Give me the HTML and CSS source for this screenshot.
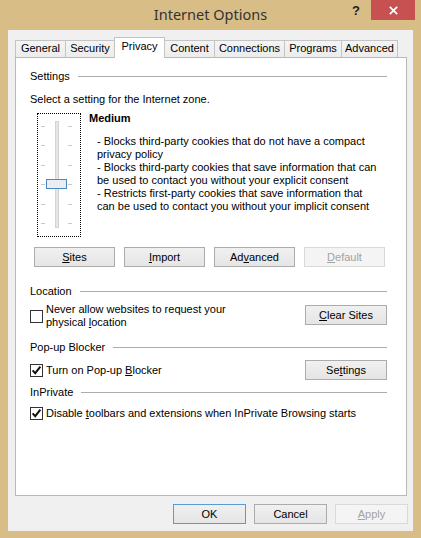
FILE: index.html
```html
<!DOCTYPE html>
<html lang="en">
<head>
<meta charset="utf-8">
<title>Internet Options</title>
<link rel="stylesheet" href="styles.css">
</head>
<body>
<div class="window">
  <header class="titlebar">
    <div class="spacer"></div>
    <div class="title">Internet Options</div>
    <div class="controls">
      <span class="help">?</span>
      <span class="close"><svg width="9" height="9" viewBox="0 0 9 9"><path d="M0.8 0.8 L8.2 8.2 M8.2 0.8 L0.8 8.2" stroke="#fff" stroke-width="1.7" fill="none"/></svg></span>
    </div>
  </header>

  <div class="client">
    <nav class="tabs">
      <div class="tab t-general">General</div>
      <div class="tab t-security">Security</div>
      <div class="tab tab-active t-privacy">Privacy</div>
      <div class="tab t-content">Content</div>
      <div class="tab t-connections">Connections</div>
      <div class="tab t-programs">Programs</div>
      <div class="tab t-advanced">Advanced</div>
    </nav>

    <section class="panel">
      <div class="group g-settings">Settings</div>
      <div class="prompt">Select a setting for the Internet zone.</div>

      <div class="level">
        <div class="slider">
          <svg width="42" height="122" viewBox="0 0 42 122">
            <rect x="17.5" y="7.5" width="3" height="106" fill="#e6e6e6" stroke="#d4d4d4"/>
            <g fill="#c8c8c8">
              <rect x="3" y="12" width="4" height="1"/><rect x="30" y="12" width="4" height="1"/>
              <rect x="3" y="31" width="4" height="1"/><rect x="30" y="31" width="4" height="1"/>
              <rect x="3" y="51" width="4" height="1"/><rect x="30" y="51" width="4" height="1"/>
              <rect x="3" y="70" width="4" height="1"/><rect x="30" y="70" width="4" height="1"/>
              <rect x="3" y="90" width="4" height="1"/><rect x="30" y="90" width="4" height="1"/>
              <rect x="3" y="109" width="4" height="1"/><rect x="30" y="109" width="4" height="1"/>
            </g>
            <rect x="8.5" y="65.5" width="20" height="9" fill="#e9eef4" stroke="#4a88c4"/>
          </svg>
        </div>
        <div class="level-info">
          <div class="level-name">Medium</div>
          <div class="level-desc">
            <div>- Blocks third-party cookies that do not have a compact</div>
            <div>privacy policy</div>
            <div>- Blocks third-party cookies that save information that can</div>
            <div>be used to contact you without your explicit consent</div>
            <div>- Restricts first-party cookies that save information that</div>
            <div>can be used to contact you without your implicit consent</div>
          </div>
        </div>
      </div>

      <div class="btn-row">
        <span class="btn btn-wide"><u>S</u>ites</span>
        <span class="btn btn-wide"><u>I</u>mport</span>
        <span class="btn btn-wide">Ad<u>v</u>anced</span>
        <span class="btn btn-wide btn-disabled"><u>D</u>efault</span>
      </div>

      <div class="group g-location">Location</div>
      <div class="opt-row r-location">
        <div class="check check-center">
          <span class="box"></span>
          <span class="check-text">Never allow websites to request your<br>physical <u>l</u>ocation</span>
        </div>
        <span class="btn btn-side btn-location"><u>C</u>lear Sites</span>
      </div>

      <div class="group g-popup">Pop-up Blocker</div>
      <div class="opt-row r-popup">
        <div class="check check-center">
          <span class="box box-checked"><svg width="11" height="11" viewBox="0 0 11 11"><path d="M1.6 5.4 L4.2 8.2 L9.4 1.6" stroke="#111" stroke-width="2" fill="none"/></svg></span>
          <span class="check-text">Turn on Pop-up <u>B</u>locker</span>
        </div>
        <span class="btn btn-side">Se<u>t</u>tings</span>
      </div>

      <div class="group g-inprivate">InPrivate</div>
      <div class="opt-row r-inprivate">
        <div class="check check-center">
          <span class="box box-checked"><svg width="11" height="11" viewBox="0 0 11 11"><path d="M1.6 5.4 L4.2 8.2 L9.4 1.6" stroke="#111" stroke-width="2" fill="none"/></svg></span>
          <span class="check-text">Disable <u>t</u>oolbars and extensions when InPrivate Browsing starts</span>
        </div>
      </div>
    </section>

    <footer class="footer">
      <span class="btn btn-foot btn-default">OK</span>
      <span class="btn btn-foot">Cancel</span>
      <span class="btn btn-foot btn-disabled"><u>A</u>pply</span>
    </footer>
  </div>
</div>
</body>
</html>
```

FILE: styles.css
```css
* {
  box-sizing: border-box;
}

html,
body {
  margin: 0;
  padding: 0;
}

body {
  width: 421px;
  height: 538px;
  overflow: hidden;
  background: #d9bd87;
  font-family: "Liberation Sans", Arial, sans-serif;
  font-size: 11px;
  line-height: 13px;
  color: #000;
}

.window {
  width: 421px;
  height: 538px;
  display: flex;
  flex-direction: column;
  padding-bottom: 7px;
}

/* ---------- title bar ---------- */
.titlebar {
  height: 30px;
  flex: none;
  display: grid;
  grid-template-columns: 1fr auto 1fr;
  align-items: start;
}

.title {
  font-family: "Noto Sans", "Open Sans", sans-serif;
  font-size: 14.5px;
  line-height: 29px;
  color: #333;
  white-space: nowrap;
}

.controls {
  display: flex;
  justify-content: flex-end;
  align-items: flex-start;
}

.help {
  width: 18px;
  height: 20px;
  margin-right: 6px;
  text-align: center;
  font-family: "Liberation Sans", Arial, sans-serif;
  font-weight: bold;
  font-size: 13px;
  line-height: 22px;
  color: #222;
}

.close {
  width: 44px;
  height: 20px;
  margin-right: 6px;
  background: #c75050;
  display: flex;
  align-items: center;
  justify-content: center;
}

/* ---------- client area ---------- */
.client {
  flex: 1;
  margin: 0 8px;
  background: #f0f0f0;
  display: flex;
  flex-direction: column;
  padding: 7px 6px 7px 7px;
  min-height: 0;
}

.tabs {
  display: flex;
  align-items: flex-end;
  height: 21px;
  margin-bottom: -1px;
  flex: none;
  position: relative;
  z-index: 1;
}

.tab {
  height: 17px;
  margin-bottom: 1px;
  margin-left: -1px;
  border: 1px solid #c4c4c4;
  border-bottom: none;
  background: linear-gradient(#f4f4f4, #ececec);
  text-align: center;
  line-height: 15px;
  white-space: nowrap;
  color: #000;
}

.t-general { width: 51px; margin-left: 0; }
.t-security { width: 50px; }
.t-privacy { width: 51px; }
.t-content { width: 51px; }
.t-connections { width: 71px; }
.t-programs { width: 58px; }
.t-advanced { width: 57px; }

.tab-active {
  height: 21px;
  margin-bottom: 0;
  background: #fff;
  line-height: 17px;
  position: relative;
  z-index: 2;
}

.panel {
  flex: 1;
  min-height: 0;
  background: #fff;
  border: 1px solid #b9b9b9;
  padding: 12px 19px 0 14px;
  display: flex;
  flex-direction: column;
}

/* group headings with etched line */
.group {
  display: flex;
  align-items: center;
  gap: 8px;
  height: 13px;
  white-space: nowrap;
}

.group::after {
  content: "";
  flex: 1;
  height: 1px;
  background: #acacac;
}

.prompt {
  margin-top: 10px;
  white-space: nowrap;
}

.level {
  display: flex;
  align-items: flex-start;
  margin-top: 6px;
}

.slider {
  width: 44px;
  height: 124px;
  margin-top: 1px;
  margin-left: 7px;
  border: 1px dotted #000;
  flex: none;
}

.slider svg {
  display: block;
}

.level-info {
  margin-left: 8px;
  white-space: nowrap;
}

.level-name {
  font-weight: bold;
}

.level-desc {
  margin-top: 10px;
  padding-left: 8px;
}

/* ---------- buttons ---------- */
.btn {
  display: flex;
  align-items: center;
  justify-content: center;
  height: 20px;
  border: 1px solid #acacac;
  background: linear-gradient(#f0f0f0, #e5e5e5);
  color: #000;
  white-space: nowrap;
  flex: none;
}

.btn u {
  text-underline-offset: 1px;
}

.btn-disabled {
  border-color: #d9d9d9;
  background: #f4f4f4;
  color: #a3a3a3;
}

.btn-default {
  border-color: #5b9bd5;
}

.btn-row {
  display: flex;
  gap: 9px;
  margin-top: 10px;
  margin-left: 4px;
}

.btn-wide {
  width: 81px;
}

.btn-side {
  width: 82px;
  margin-left: auto;
}

/* ---------- option rows ---------- */
.g-location { margin-top: 18px; }
.g-popup { margin-top: 12px; }
.g-inprivate { margin-top: 6px; }

.opt-row {
  display: flex;
  align-items: flex-start;
}

.r-location { margin-top: 5px; }
.r-location .btn-location { margin-top: 2px; }
.r-popup { margin-top: 6px; align-items: center; }
.r-inprivate { margin-top: 8px; }

.check {
  display: flex;
  align-items: center;
  white-space: nowrap;
}

.box {
  width: 13px;
  height: 13px;
  border: 1px solid #333;
  background: #fff;
  margin-right: 3px;
  display: flex;
  align-items: center;
  justify-content: center;
  flex: none;
}

.box svg {
  display: block;
}

/* ---------- footer ---------- */
.footer {
  flex: none;
  display: flex;
  justify-content: flex-end;
  gap: 8px;
  margin-top: 8px;
  margin-right: -1px;
}

.btn-foot {
  width: 73px;
}
```
